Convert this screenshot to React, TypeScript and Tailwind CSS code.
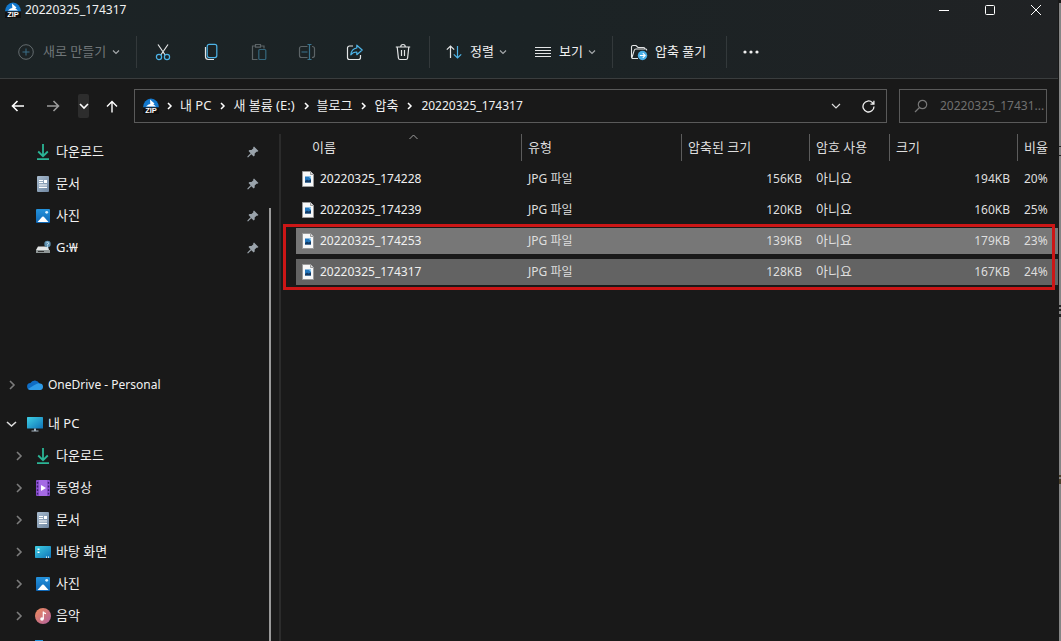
import type { ReactNode } from 'react';

const files = [
  { name: '20220325_174228', packed: '156KB', size: '194KB', ratio: '20%', row: '' },
  { name: '20220325_174239', packed: '120KB', size: '160KB', ratio: '25%', row: '' },
  { name: '20220325_174253', packed: '139KB', size: '179KB', ratio: '23%', row: 'bg-[#777777]' },
  { name: '20220325_174317', packed: '128KB', size: '167KB', ratio: '24%', row: 'bg-[#636363]' },
];

const crumbs = ['내 PC', '새 볼륨 (E:)', '블로그', '압축'];

const Chevron = ({ className = '' }: { className?: string }) => (
  <svg className={className} width="8" height="8" viewBox="0 0 8 8" fill="none" stroke="currentColor" strokeWidth="1.2">
    <path d="M1 2.5 4 5.5 7 2.5" />
  </svg>
);

const ZipIcon = () => (
  <svg width="16" height="16" viewBox="0 0 16 16" className="shrink-0">
    <path d="M0 9.5a8 9 0 0 1 16 0Z" fill="#1277cc" />
    <path d="M7 1.5 11.5 5.5 10.3 6.3 13 8.6 3 8.6 5.5 6.4 7.3 6Z" fill="#fff" />
    <rect y="9.5" width="16" height="6.5" fill="#111" />
    <text x="8" y="15.4" textAnchor="middle" fontSize="7.5" fontWeight="700" fill="#fff" fontFamily="Liberation Sans, sans-serif">
      ZIP
    </text>
  </svg>
);

const DownloadIcon = () => (
  <svg width="16" height="18" viewBox="0 0 16 18" fill="none" stroke="#2bb596" strokeWidth="1.8">
    <path d="M8 1v12M3.2 8.5 8 13.2l4.8-4.7M2 16.2h12" />
  </svg>
);

const DocumentIcon = () => (
  <svg width="16" height="16" viewBox="0 0 16 16">
    <defs>
      <linearGradient id="doc" x1="0" y1="0" x2="1" y2="1">
        <stop stopColor="#a9bccf" />
        <stop offset="1" stopColor="#6f86a0" />
      </linearGradient>
    </defs>
    <rect x="2" width="12" height="16" rx="1" fill="url(#doc)" />
    <path d="M4 4.5h4M4 6.5h4M4 9h8M4 11.3h8" stroke="#fff" strokeWidth="1.2" />
    <path d="M9 4h3v3H9z" fill="#fff" />
  </svg>
);

const PictureIcon = () => (
  <svg width="16" height="16" viewBox="0 0 16 16">
    <defs>
      <linearGradient id="pic" x1="0" y1="0" x2="0" y2="1">
        <stop stopColor="#2492dc" />
        <stop offset="1" stopColor="#0f67b5" />
      </linearGradient>
    </defs>
    <rect x="1" y="1" width="14" height="14" rx="1" fill="url(#pic)" />
    <path d="m2.5 14 4.7-5.2q.8-.8 1.6 0l4.7 5.2Z" fill="#fff" />
    <circle cx="11.7" cy="4.3" r="1.4" fill="#d8efff" />
  </svg>
);

const DriveIcon = () => (
  <svg width="16" height="16" viewBox="0 0 16 16">
    <path d="m3 6.5-2 3.5h13l-1-3.5Z" fill="#e4e6e6" />
    <path d="M1 10h14v3H1Z" fill="#8f9696" />
    <path d="M3 11.5h6" stroke="#333" />
    <circle cx="12.5" cy="4" r="3.2" fill="#5d8fae" />
    <path d="M11.5 2.8q1-1 2 0t-1 1.7v1M12.5 6.3v3" fill="none" stroke="#cfe6f4" />
  </svg>
);

const OneDriveIcon = () => (
  <svg width="16" height="16" viewBox="0 0 16 16">
    <path d="M3.6 12.8A3.4 3.4 0 0 1 3.4 6 5 5 0 0 1 12.4 6.6 3.2 3.2 0 0 1 13 12.8Z" fill="#0f6cc4" />
    <path d="M1 12 7 8.2l3-1.5a3.2 3.2 0 0 1 2.6-.2 3.2 3.2 0 0 1 .4 6.4H3.6Q2 12.9 1 12Z" fill="#2e9be8" />
  </svg>
);

const MonitorIcon = () => (
  <svg width="16" height="16" viewBox="0 0 16 16">
    <defs>
      <linearGradient id="mon" x1="0" y1="0" x2="1" y2="1">
        <stop stopColor="#3fd0e4" />
        <stop offset="1" stopColor="#0f73b8" />
      </linearGradient>
    </defs>
    <rect y="1" width="16" height="11.5" rx=".6" fill="url(#mon)" />
    <path d="M7 12.5h2v2H7zM4.5 14.5h7v1h-7z" fill="#a7b6c2" />
  </svg>
);

const VideoIcon = () => (
  <svg width="16" height="16" viewBox="0 0 16 16">
    <rect x="1" width="14" height="16" rx="1" fill="#8a4fd0" />
    <rect x="4" width="8" height="16" fill="#a56ae4" />
    <path d="M2.5 2v13M13.5 2v13" stroke="#3b1d6b" strokeWidth="1.4" strokeDasharray="1.8 1.8" />
    <path d="m6 5 5 3-5 3Z" fill="#fff" />
  </svg>
);

const DesktopIcon = () => (
  <svg width="16" height="16" viewBox="0 0 16 16">
    <rect y="2" width="16" height="12" rx=".8" fill="url(#mon)" />
    <path d="M2.5 4.5h2v1.5h-2zM2.5 7.5h2V9h-2zM11 12.5h1v1.2h-1zM13 12.5h1v1.2h-1z" fill="#fff" />
  </svg>
);

const MusicIcon = () => (
  <svg width="16" height="16" viewBox="0 0 16 16">
    <defs>
      <linearGradient id="mus" x1="0" y1="0" x2="1" y2="1">
        <stop stopColor="#ef8b5a" />
        <stop offset="1" stopColor="#b0609f" />
      </linearGradient>
    </defs>
    <circle cx="8" cy="8" r="8" fill="url(#mus)" />
    <circle cx="7" cy="11" r="1.8" fill="#fff" />
    <path d="M8.3 11V3.6q.4 1.7 2.7 2" fill="none" stroke="#fff" strokeWidth="1.2" />
  </svg>
);

const PinIcon = () => (
  <svg width="12" height="12" viewBox="0 0 12 12" fill="#9aa3ab">
    <path d="M7 .5 11.5 5l-1.2.8-.8-.1-1.8 1.9v2l-1 1L4.3 8.3 1 11.5l-.7-.4.3-.8 3-3L1.5 5l1-1h2l1.9-1.8-.2-.9Z" />
  </svg>
);

const JpgIcon = () => (
  <svg width="12" height="16" viewBox="0 0 12 16" className="shrink-0">
    <path d="M.5.5h8l3 3v12H.5Z" fill="#f8f8f8" stroke="#9a9a9a" />
    <path d="M8.5.5v3h3" fill="#ddd" stroke="#9a9a9a" />
    <rect x="3" y="5.5" width="6" height="6" fill="#2377bd" />
    <path d="M3 11.5V10l2-1.5 1.5 1L9 8.5v3Z" fill="#153a63" />
    <path d="M6.5 5.5H9V8Z" fill="#8fd0f2" />
  </svg>
);

const pinned = [
  { label: '다운로드', icon: <DownloadIcon /> },
  { label: '문서', icon: <DocumentIcon /> },
  { label: '사진', icon: <PictureIcon /> },
  { label: 'G:₩', icon: <DriveIcon /> },
];

const folders = [
  { label: '다운로드', icon: <DownloadIcon /> },
  { label: '동영상', icon: <VideoIcon /> },
  { label: '문서', icon: <DocumentIcon /> },
  { label: '바탕 화면', icon: <DesktopIcon /> },
  { label: '사진', icon: <PictureIcon /> },
  { label: '음악', icon: <MusicIcon /> },
];

const Divider = () => <div className="h-8 w-px shrink-0 bg-[#33393b]" />;

const ToolButton = ({ label, children }: { label: string; children: ReactNode }) => (
  <button aria-label={label} className="flex h-8 w-12 items-center justify-center">
    <svg width="18" height="18" viewBox="0 0 18 18" fill="none" stroke="#e3e5e6" strokeWidth="1.2">
      {children}
    </svg>
  </button>
);

const TreeChevron = () => (
  <svg width="8" height="10" viewBox="0 0 8 10" fill="none" stroke="#7c7c7c" strokeWidth="1.6">
    <path d="m2 1 4 4-4 4" />
  </svg>
);

const CrumbChevron = () => (
  <svg className="mr-[7px] ml-2" width="6" height="8" viewBox="0 0 6 8" fill="none" stroke="#fff" strokeWidth="1.5">
    <path d="m1 1 3 3-3 3" />
  </svg>
);

const Toolbar = () => (
  <div className="flex h-[59px] items-center border-b border-[#3a3d3e] pt-[6px] pl-px text-[13px] text-[#f0f0f0]">
    <button className="ml-[17px] flex items-center whitespace-nowrap text-[#707678]">
      <svg width="16" height="16" viewBox="0 0 16 16" fill="none" stroke="#636b6e">
        <circle cx="8" cy="8" r="7.3" />
        <path d="M8 4.5v7M4.5 8h7" stroke="#3a6f88" />
      </svg>
      <span className="ml-[9px] w-[65px] text-left">새로 만들기</span>
      <Chevron className="ml-1 text-[#a5a9ab]" />
    </button>
    <div className="ml-4"><Divider /></div>
    <div className="ml-[2px] flex">
      <ToolButton label="잘라내기">
        <path d="M4 1.5 11.2 12M14 1.5 6.8 12" />
        <g stroke="#4db4e8">
          <circle cx="5" cy="14" r="2.6" />
          <circle cx="13" cy="14" r="2.6" />
        </g>
      </ToolButton>
      <ToolButton label="복사">
        <path d="M3.5 4v9.5q0 3 3 3H12" />
        <rect x="5.2" y="1.4" width="9.6" height="13.2" rx="2" stroke="#4db4e8" />
      </ToolButton>
      <ToolButton label="붙여넣기">
        <path d="M7.5 16.5h-5V3H5M11 3h3v2.5M5.5 1.5h5v2.6h-5Z" stroke="#5c6467" />
        <rect x="8.8" y="6.5" width="7" height="10" rx="1" stroke="#35667c" />
      </ToolButton>
      <ToolButton label="이름 바꾸기">
        <path d="M9.5 3.5h-6a2 2 0 0 0-2 2v7a2 2 0 0 0 2 2h6M14 3.5q2.5 0 2.5 2v7q0 2-2.5 2" stroke="#5c6467" />
        <path d="M3.5 9h6M9.5 1.5h4M9.5 16.5h4M11.5 1.5v15" stroke="#3a758f" />
      </ToolButton>
      <ToolButton label="공유">
        <path d="M7 3H3.5a2 2 0 0 0-2 2v9.5a2 2 0 0 0 2 2h9a2 2 0 0 0 2-2V12" />
        <path d="M10.8 2.2 16.2 7l-5.4 4.7V9Q7 8.8 4.8 11.8 5.4 5.7 10.8 5Z" stroke="#4db4e8" strokeLinejoin="round" />
      </ToolButton>
      <ToolButton label="삭제">
        <path d="M1.8 4h14.4M3.2 4l1.2 11q.2 1.5 1.6 1.5h6q1.4 0 1.6-1.5l1.2-11M6.7 4q0-2.5 2.3-2.5T11.3 4M7.5 7v6M10.5 7v6" />
      </ToolButton>
    </div>
    <div className="ml-[2px]"><Divider /></div>
    <button className="ml-4 flex items-center whitespace-nowrap">
      <svg width="16" height="16" viewBox="0 0 16 16" fill="none" stroke="#e3e5e6" strokeWidth="1.2">
        <path d="M4.5 14V2M.8 5.7 4.5 2l3.7 3.7" />
        <path d="M11.5 2v12M7.8 10.3l3.7 3.7 3.7-3.7" stroke="#4db4e8" />
      </svg>
      <span className="ml-2 w-6">정렬</span>
      <Chevron className="ml-[5px] text-[#a5a9ab]" />
    </button>
    <button className="ml-7 flex items-center whitespace-nowrap">
      <svg width="16" height="16" viewBox="0 0 16 16" stroke="#e3e5e6">
        <path d="M0 3.5h16M0 6.5h16M0 9.5h16M0 12.5h16" />
      </svg>
      <span className="ml-2 w-6">보기</span>
      <Chevron className="ml-[5px] text-[#a5a9ab]" />
    </button>
    <div className="ml-4"><Divider /></div>
    <button className="ml-[17px] flex items-center whitespace-nowrap">
      <svg width="18" height="18" viewBox="0 0 18 18" fill="none" stroke="#e3e5e6" strokeWidth="1.1">
        <path d="M8 15.5H3a1.5 1.5 0 0 1-1.5-1.5V4A1.5 1.5 0 0 1 3 2.5h3l2 2h5.5A1.5 1.5 0 0 1 15 6M2 14.5 4.2 7.3Q4.6 6 6 6h9.8q1 0 .8 1.5" />
        <circle cx="12.5" cy="12.5" r="4.7" fill="#49aee5" stroke="none" />
        <path d="M9.8 12.5h5.2M12.8 10.2l2.3 2.3-2.3 2.3" stroke="#fff" />
      </svg>
      <span className="ml-[7px] w-[53px] text-left">압축 풀기</span>
    </button>
    <div className="ml-[18px]"><Divider /></div>
    <button aria-label="더 보기" className="ml-4">
      <svg width="16" height="4" viewBox="0 0 16 4" fill="#f0f0f0">
        <circle cx="2" cy="2" r="1.6" />
        <circle cx="8" cy="2" r="1.6" />
        <circle cx="14" cy="2" r="1.6" />
      </svg>
    </button>
  </div>
);

const AddressBar = () => (
  <div className="flex h-11 items-end text-[#f0f0f0]">
    <div className="flex h-[34px] items-center">
      <button aria-label="뒤로" className="ml-[11px]">
        <svg width="14" height="12" viewBox="0 0 14 12" fill="none" stroke="#fff" strokeWidth="1.6">
          <path d="M13 6H1.5M6.5 1l-5 5 5 5" />
        </svg>
      </button>
      <button aria-label="앞으로" className="ml-[21px]">
        <svg width="14" height="12" viewBox="0 0 14 12" fill="none" stroke="#9b9b9b" strokeWidth="1.6">
          <path d="M1 6h11.5M7.5 1l5 5-5 5" />
        </svg>
      </button>
      <button aria-label="최근 위치" className="ml-[18px] flex h-6 w-[11px] items-center justify-center rounded-xs bg-[#2d2d2d]">
        <svg width="10" height="8" viewBox="0 0 10 8" fill="none" stroke="#fff" strokeWidth="1.6">
          <path d="m1 2 4 4 4-4" />
        </svg>
      </button>
      <button aria-label="위로" className="ml-[17px]">
        <svg width="12" height="13" viewBox="0 0 12 13" fill="none" stroke="#fff" strokeWidth="1.4">
          <path d="M6 12.5V1.5M1 6.5l5-5 5 5" />
        </svg>
      </button>
    </div>
    <div className="ml-4 flex h-[34px] min-w-0 flex-1 items-center border border-[#5a5a5a] pl-2">
      <ZipIcon />
      {crumbs.map((crumb) => (
        <div key={crumb} className="flex items-center whitespace-nowrap">
          <CrumbChevron />
          <a href="#" className="pr-px text-[13px]">{crumb}</a>
        </div>
      ))}
      <CrumbChevron />
      <a href="#" className="pl-px text-[12px]">20220325_174317</a>
      <button aria-label="이전 위치" className="ml-auto">
        <svg width="10" height="8" viewBox="0 0 10 8" fill="none" stroke="#ddd" strokeWidth="1.2">
          <path d="m1 2 4 4 4-4" />
        </svg>
      </button>
      <button aria-label="새로 고침" className="mr-[11px] ml-[21px]">
        <svg width="13" height="13" viewBox="0 0 13 13" fill="none" stroke="#f0f0f0" strokeWidth="1.3">
          <path d="M12 6.5A5.5 5.5 0 1 1 10.4 2.6L11.7 4M11.9.8V4.2H8.5" />
        </svg>
      </button>
    </div>
    <label className="mr-[11px] ml-3 flex h-[34px] w-[148px] items-center border border-[#5a5a5a] pl-[14px]">
      <svg width="14" height="14" viewBox="0 0 14 14" fill="none" stroke="#777" strokeWidth="1.2">
        <circle cx="8.5" cy="5.5" r="4.2" />
        <path d="M5.5 8.5 1 13" />
      </svg>
      <input
        aria-label="검색"
        placeholder="20220325_17431..."
        className="ml-3 min-w-0 flex-1 bg-transparent text-[12px] outline-none placeholder:text-[#707070]"
      />
    </label>
  </div>
);

const Sidebar = () => (
  <nav className="flex w-[283px] shrink-0 overflow-hidden text-[13px] text-[#f2f2f2]">
    <div className="flex-1 pt-[7px]">
      {pinned.map((item) => (
        <a key={item.label} href="#" className="flex h-8 items-center pr-[10px] pl-[35px]">
          <span className="flex w-[21px]">{item.icon}</span>
          {item.label}
          <span className="ml-auto"><PinIcon /></span>
        </a>
      ))}
      <a href="#" className="mt-[105px] flex h-8 items-center pl-2 text-[12px]">
        <TreeChevron />
        <span className="mr-[5px] ml-[11px]"><OneDriveIcon /></span>
        OneDrive - Personal
      </a>
      <a href="#" className="mt-[7px] flex h-8 items-center pl-[6px]">
        <svg width="11" height="8" viewBox="0 0 11 8" fill="none" stroke="#ddd" strokeWidth="1.6">
          <path d="m1 2 4.5 4L10 2" />
        </svg>
        <span className="mr-[5px] ml-[10px]"><MonitorIcon /></span>
        내 PC
      </a>
      {folders.map((item) => (
        <a key={item.label} href="#" className="flex h-8 items-center pl-[15px]">
          <TreeChevron />
          <span className="ml-3 flex w-[21px]">{item.icon}</span>
          {item.label}
        </a>
      ))}
      <div className="ml-[35px] h-8 pt-2">
        <div className="h-4 w-2 bg-[#2492dc]" />
      </div>
    </div>
    <div className="mt-[79px] w-[2px] bg-[#9a9a9a]" />
    <div className="mt-[5px] ml-[8px] w-[2px] bg-[#2b2b2b]" />
    <div className="w-[2px]" />
  </nav>
);

const th = 'h-[26px] border-r border-[#5c5c5c] p-0 pl-[6px] text-left font-normal text-[#dedede]';

const FileTable = () => (
  <main className="relative min-w-0 flex-1 self-start pl-[13px]">
    <table className="w-full table-fixed border-separate border-spacing-x-0 border-spacing-y-[5px] text-[13px] whitespace-nowrap text-[#dedede]">
      <thead>
        <tr>
          <th className="relative h-[27px] border-r border-[#5c5c5c] p-0 pl-4 text-left font-normal">
            이름
            <svg className="absolute top-0 left-1/2" width="9" height="6" viewBox="0 0 9 6" fill="none" stroke="#a0a0a0">
              <path d="m.5 5 4-4 4 4" />
            </svg>
          </th>
          <th className={`w-[160px] ${th}`}>유형</th>
          <th className={`w-[128px] ${th}`}>압축된 크기</th>
          <th className={`w-[80px] ${th}`}>암호 사용</th>
          <th className={`w-[128px] ${th}`}>크기</th>
          <th className="w-[40px] p-0 pl-[6px] text-left font-normal">비율</th>
        </tr>
      </thead>
      <tbody>
        {files.map((file) => (
          <tr key={file.name} className={file.row}>
            <td className="h-[26px] p-0 pl-[6px] text-[12px]">
              <span className="flex items-center gap-[6px] text-[#f0f0f0]">
                <JpgIcon />
                {file.name}
              </span>
            </td>
            <td className="p-0 pl-[6px] text-[12px]">JPG 파일</td>
            <td className="p-0 pr-2 text-right text-[12px]">{file.packed}</td>
            <td className="p-0 pl-[6px]">아니요</td>
            <td className="p-0 pr-2 text-right text-[12px]">{file.size}</td>
            <td className="p-0 pl-[6px] text-[12px]">{file.ratio}</td>
          </tr>
        ))}
      </tbody>
    </table>
    <div className="pointer-events-none absolute right-[3px] bottom-0 left-0 h-[66px] border-3 border-[#cc1616]" />
  </main>
);

export default function App() {
  return (
    <div className="flex h-screen overflow-hidden bg-[#191919] font-['Noto_Sans','Noto_Sans_CJK_KR',sans-serif]">
      <div className="flex min-w-0 flex-1 flex-col">
        <header className="bg-linear-to-r from-[#1c2325] via-[#1b2325] to-[#202224]">
          <div className="flex h-5 items-center text-[#f2f2f2]">
            <div className="ml-[5px] flex items-center gap-1 text-[12px]">
              <ZipIcon />
              <span>20220325_174317</span>
            </div>
            <div className="mr-[17px] ml-auto flex gap-9">
              <button aria-label="최소화">
                <svg width="10" height="10" viewBox="0 0 10 10" stroke="#fff"><path d="M0 5.5h10" /></svg>
              </button>
              <button aria-label="최대화">
                <svg width="10" height="10" viewBox="0 0 10 10" fill="none" stroke="#fff"><rect x=".5" y=".5" width="9" height="9" rx="1" /></svg>
              </button>
              <button aria-label="닫기">
                <svg width="10" height="10" viewBox="0 0 10 10" stroke="#fff"><path d="m0 0 10 10M10 0 0 10" /></svg>
              </button>
            </div>
          </div>
          <Toolbar />
        </header>
        <AddressBar />
        <div className="flex min-h-0 flex-1 pt-[6px]">
          <Sidebar />
          <FileTable />
        </div>
      </div>
      {/* sliver of the window behind */}
      <div className="mt-[3px] ml-px flex w-[2px] flex-col bg-[#858585]">
        <div className="mt-[143px] h-px bg-[#222]" />
        <div className="mt-[8px] h-px bg-[#222]" />
        <div className="mt-[149px] h-[2px] bg-[#222]" />
        <div className="mt-[2px] h-[2px] bg-[#222]" />
        <div className="mt-[3px] h-[3px] bg-[#222]" />
        <div className="mt-[158px] h-[2px] bg-[#4a3f2a]" />
        <div className="mt-[2px] h-[5px] bg-[#4a3f2a]" />
      </div>
    </div>
  );
}
